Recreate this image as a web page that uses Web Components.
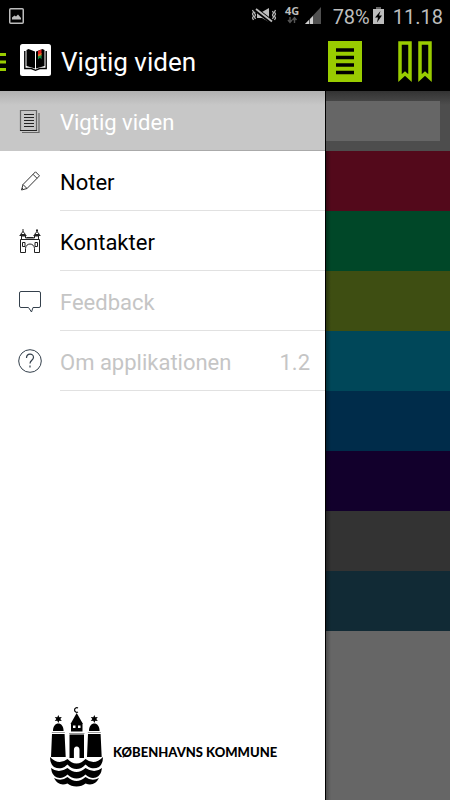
<!DOCTYPE html>
<html lang="da">
<head>
<meta charset="utf-8">
<meta name="viewport" content="width=device-width, initial-scale=1">
<title>Vigtig viden</title>
<style>
html, body { margin: 0; height: 100%; }
body { font-family: Roboto, "Liberation Sans", sans-serif; background: #000; }
</style>
</head>
<body>
<kk-app></kk-app>
<script>
function define(name, html) {
  const template = document.createElement('template');
  template.innerHTML = '<style>*{box-sizing:border-box}svg{display:block;flex:none}</style>' + html;
  customElements.define(name, class extends HTMLElement {
    constructor() {
      super();
      this.attachShadow({ mode: 'open' }).append(template.content.cloneNode(true));
    }
  });
}

define('kk-status-bar', `
<style>
:host { display: flex; align-items: center; height: 31px; padding: 0 7px 0 9px; background: #000; color: #bdbdbd; font-size: 20px; line-height: 24px; }
.net { margin-left: auto; margin-right: 11px; }
.battery { margin: 0 9px 0 3px; }
span { padding-top: 2px; }
</style>
<svg width="15" height="16" viewBox="0 0 15 16"><rect x=".75" y=".75" width="13.5" height="14.5" rx="1" fill="none" stroke="#bdbdbd" stroke-width="1.5"/><path d="M3 11.500V9.500l2.500-2 1.500 1 2-2 3 3.500v1.500z" fill="#bdbdbd"/></svg>
<svg class="net" width="71" height="30" viewBox="0 -5 71 30">
  <g fill="none" stroke="#bdbdbd" stroke-width="1.200"><path d="M1.500 4l1 2-1 2 1 2-1 2 1 2M4.500 5l-1 2 1 2-1 2 1 2M24.500 4l-1 2 1 2-1 2 1 2-1 2M21.500 5l1 2-1 2 1 2-1 2"/></g>
  <path d="M6 6h5l7-4v14l-7-4H6z" fill="#bdbdbd"/><path d="M4 3l17 13" stroke="#000" stroke-width="4.500"/><path d="M5 3l16 12.500" stroke="#bdbdbd" stroke-width="1.800"/>
  <text x="34" y="9" font-family="Open Sans, sans-serif" font-weight="700" font-size="11" fill="#bdbdbd">4G</text>
  <path d="M39 11v5M37 14l2 2.500 2-2.500M43.500 17v-5M41.500 14l2-2.500 2 2.500" fill="none" stroke="#555" stroke-width="1.400"/>
  <path d="M54 18L70 1v17z" fill="#505050"/><path d="M54 18l4-4v4zM59 13l3-3v8h-3z" fill="#d0d0d0"/>
</svg>
<span>78%</span>
<svg class="battery" width="11" height="18" viewBox="0 0 11 18"><path d="M3 0h5v2H3z" fill="#666"/><path d="M0 2h11v15H0z" fill="#bdbdbd"/><path d="M7.500 4L2 10.500h3l-1 5 5-7H6z" fill="#000"/></svg>
<span>11.18</span>`);

define('kk-app-bar', `
<style>
:host { display: flex; align-items: center; height: 60px; background: #000; color: #fff; padding-right: 18px; }
button { border: 0; padding: 0; margin: 0; background: none; display: block; cursor: pointer; }
.logo { margin: 0 10px 2px 14px; }
h1 { margin: 0; padding-top: 2px; flex: 1; font-size: 26px; font-weight: 400; line-height: 30px; }
.marks { margin-left: 36px; }
</style>
<button aria-label="Menu"><svg width="6" height="20" viewBox="0 0 6 20"><path d="M0 3.500h6M0 11h6M0 18.500h6" stroke="#99cc00" stroke-width="3"/></svg></button>
<svg class="logo" width="31" height="32" viewBox="0 0 31 32">
  <rect width="31" height="32" rx="2.500" fill="#fff"/>
  <path d="M6.500 6l2-1 6.500 2.500V24.500L6.500 22z"/><path d="M16 7.500L22.500 5l2 1v16L16 24.500z"/>
  <path d="M4.800 7v17.500h6.500l4.200 1.800 4.200-1.800h6.500V7" fill="none" stroke="#000" stroke-width="1.400"/>
  <path d="M18 7l3.500-1.500v4.500L18 11z" fill="#e32222"/><path d="M18 10.500l3.500-1.500v3L18 13z" fill="#e87722"/><path d="M18 12.500l3.500-1.500v4.500L20 13.500l-2 2z" fill="#159447"/>
</svg>
<h1>Vigtig viden</h1>
<button aria-label="Liste"><svg width="34" height="41" viewBox="0 0 34 41"><path d="M0 0h34v41H0z" fill="#99cc00"/><path d="M8 9h18M8 16.500h18M8 24h18M8 31.500h18" stroke="#000" stroke-width="3.500"/></svg></button>
<button class="marks" aria-label="Bogmærker"><svg width="34" height="41" viewBox="0 0 34 41"><path d="M2 2h10v35l-5-4.500L2 37zM22 2h10v35l-5-4.500-5 4.500z" fill="none" stroke="#99cc00" stroke-width="3.500"/></svg></button>`);

define('kk-menu-item', `
<style>
:host { display: block; color: #000; }
:host([muted]) { color: #c5c5c5; }
:host([selected]) { color: #fff; background: linear-gradient(#b0b0b0, #c7c7c7 14px); --line: #aaa; }
a { display: flex; height: 60px; color: inherit; text-decoration: none; font-size: 22px; line-height: 28px; }
.icon { width: 60px; display: grid; place-items: center; }
.label { flex: 1; display: flex; justify-content: space-between; align-items: center; padding: 4px 15px 0 0; border-bottom: 1px solid var(--line, #e1e1e1); }
</style>
<a href="#"><span class="icon"><slot name="icon"></slot></span><span class="label"><slot></slot><slot name="value"></slot></span></a>`);

define('kk-brand', `
<style>
:host { display: flex; align-items: center; gap: 9px; padding: 0 0 13px 50px; color: #000; font: 900 13px/16px Lato, sans-serif; }
span { padding-top: 9px; white-space: nowrap; }
</style>
<svg width="54" height="80" viewBox="0 0 54 80">
  <defs><path id="star" d="M0-4l1 2.200 2.500-.2L2 0l1.500 2L1 1.800 0 4-1 1.800-3.500 2-2 0-3.500-2-1-1.800z"/></defs>
  <path d="M28 1a2.300 2.300 0 1 0 0 4" fill="none" stroke="#000" stroke-width="1.200"/>
  <use href="#star" x="8.300" y="12"/><use href="#star" x="44.300" y="12"/>
  <path d="M26.700 6l6.300 11H20.500z"/><path d="M21 17h11.500v7.500H21z"/><path d="M23 18.500h2.500V21H23zM28 18.500h2.500V21H28z" fill="#fff"/>
  <path d="M19 26.500h15.500" stroke="#999"/><path d="M19.500 27.500H34V51h-4.500v-8a2.800 3.500 0 0 0-5.600 0v8H19.500z"/>
  <g id="tower"><path d="M3 24c0-5 2.500-7.500 5.300-7.500s5.300 2.500 5.300 7.500zM2 27h12.600L15.700 50H1z"/><path d="M1.800 25.500h13" stroke="#999"/></g>
  <use href="#tower" x="36"/>
  <path d="M0 50q8.500 9 17.500 2 9 9 18 0 9 7 17.500-2 0 7-4 10-4 2-8 1-3-1-5.500-3.500-4 4.500-9 4.500t-9-4.500Q15 60 12 61q-4 1-8-1-4-3-4-10z"/>
  <path d="M1 61q7.500 6 16.500 0 9 8 18 0 9 6 16.500 0-1 8-6 9.500-6 1.500-10.500-3-4 4-9 4t-9-4Q13 72 7 70.500 2 69 1 61z"/>
  <path d="M4 71q7 4 13.500-1 9 8 18 0 6.500 5 13.500 1-3 6-9 6.500-2 0-4.500-1-3.500 3-9 3t-9-3q-2.500 1-4.500 1Q7 77 4 71z"/>
</svg>
<span>KØBENHAVNS KOMMUNE</span>`);

define('kk-drawer', `
<style>
:host { display: flex; flex-direction: column; background: #fff; }
kk-brand { margin-top: auto; }
</style>
<nav>
<kk-menu-item selected><svg slot="icon" width="22" height="26" viewBox="0 0 22 26" fill="none" stroke="#666"><path d="M1.500 2.500h16v20h-16zM20 5v19.500H3" stroke-width="1.200"/><path d="M5 6.500h10M5 9.500h10M5 12.500h10M5 15.500h10M5 18.500h10M1 22.500h17" stroke="#222"/></svg>Vigtig viden</kk-menu-item>
<kk-menu-item><svg slot="icon" width="20" height="20" viewBox="0 0 20 20" fill="none" stroke="#333"><path d="M1.500 19l1.500-5.500L15.500.8l4 4L7 17.500zM3 13.500l4 4M13 3.300l4 4M2 17l1.500 1.500"/></svg>Noter</kk-menu-item>
<kk-menu-item><svg slot="icon" width="22" height="26" viewBox="0 0 22 26" fill="none" stroke="#222"><path d="M1.500 24.500v-13h19v13h-5v-4a4.500 4.500 0 0 0-9 0v4zM2.500 11V8h4v2h9V8h4v3M.5 7.500h7M14.500 7.500h7M7.500 9.500h7M1.500 6.500l2.500-3 2.500 3zM15.500 6.500l2.500-3 2.500 3zM4 1v3M18 1v3M17 2.500h2M3.500 14.500H6v4H3.500zM16 14.500h2.500v4H16z"/></svg>Kontakter</kk-menu-item>
<kk-menu-item muted><svg slot="icon" width="22" height="23" viewBox="0 0 22 23" fill="none" stroke="#34404c"><path d="M2 1.500h18q1.500 0 1.500 1.500v13q0 1.500-1.500 1.500h-6l-1.500 4.500-3-4.500H2Q.5 17.500.5 16V3Q.5 1.500 2 1.500z"/></svg>Feedback</kk-menu-item>
<kk-menu-item muted><svg slot="icon" width="24" height="24" viewBox="0 0 24 24" fill="none" stroke="#34404c"><circle cx="12" cy="12" r="11.300"/><path d="M8.500 9c0-5 7-5 7-.8 0 3-3.500 3-3.500 6.300M12 16.500v2" stroke-width="1.200"/></svg>Om applikationen<span slot="value">1.2</span></kk-menu-item>
</nav>
<kk-brand></kk-brand>`);

define('kk-stripe', `
<style>
:host { display: block; height: 60px; background: linear-gradient(90deg, #0005, #0000 5px), var(--tone); }
</style>`);

define('kk-backdrop', `
<style>
:host { display: block; border-left: 1px solid #000; background: linear-gradient(90deg, #0004, #0000 5px), #666; }
.search { height: 60px; padding: 10px 10px 10px 0; background: linear-gradient(#333, #4d4d4d 14px); }
.field { height: 40px; background: #666; }
</style>
<div class="search"><div class="field"></div></div>
<kk-stripe style="--tone:#53091b"></kk-stripe>
<kk-stripe style="--tone:#004728"></kk-stripe>
<kk-stripe style="--tone:#3e4e12"></kk-stripe>
<kk-stripe style="--tone:#004759"></kk-stripe>
<kk-stripe style="--tone:#002c4a"></kk-stripe>
<kk-stripe style="--tone:#12002c"></kk-stripe>
<kk-stripe style="--tone:#333333"></kk-stripe>
<kk-stripe style="--tone:#112a35"></kk-stripe>`);

define('kk-app', `
<style>
:host { display: flex; flex-direction: column; min-height: 100%; }
main { flex: 1; display: grid; grid-template-columns: 1fr 125px; }
</style>
<kk-status-bar></kk-status-bar>
<kk-app-bar></kk-app-bar>
<main><kk-drawer></kk-drawer><kk-backdrop></kk-backdrop></main>`);
</script>
</body>
</html>
